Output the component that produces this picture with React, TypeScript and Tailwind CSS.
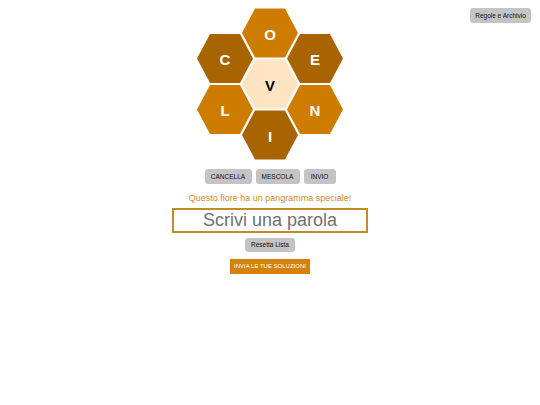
import React from "react";

const LIGHT = "#cd7c00";
const DARK = "#a86400";

function hexPoints(cx: number, cy: number) {
  const hw = 28;
  const eh = 15;
  const hh = 24.5;
  return [
    [cx - hw, cy],
    [cx - eh, cy - hh],
    [cx + eh, cy - hh],
    [cx + hw, cy],
    [cx + eh, cy + hh],
    [cx - eh, cy + hh],
  ]
    .map((p) => p.join(","))
    .join(" ");
}

const cells = [
  { l: "O", dx: 0, dy: -51, c: LIGHT },
  { l: "C", dx: -45, dy: -25.5, c: DARK },
  { l: "E", dx: 45, dy: -25.5, c: DARK },
  { l: "L", dx: -45, dy: 25.5, c: LIGHT },
  { l: "N", dx: 45, dy: 25.5, c: LIGHT },
  { l: "I", dx: 0, dy: 51, c: DARK },
];

function Hive() {
  const cx = 75;
  const cy = 78;
  return (
    <svg width="150" height="156" viewBox="0 0 150 156" className="block">
      {cells.map((cell) => (
        <g key={cell.l}>
          <polygon points={hexPoints(cx + cell.dx, cy + cell.dy)} fill={cell.c} />
          <text
            x={cx + cell.dx}
            y={cy + cell.dy + 1}
            textAnchor="middle"
            dominantBaseline="central"
            fill="#ffffff"
            fontFamily="'Liberation Sans', Arial, sans-serif"
            fontWeight="bold"
            fontSize="15"
          >
            {cell.l}
          </text>
        </g>
      ))}
      <polygon points={hexPoints(cx, cy)} fill="#ffe4c4" />
      <text
        x={cx}
        y={cy + 1}
        textAnchor="middle"
        dominantBaseline="central"
        fill="#000000"
        fontFamily="'Liberation Sans', Arial, sans-serif"
        fontWeight="bold"
        fontSize="15"
      >
        V
      </text>
    </svg>
  );
}

export default function App() {
  return (
    <div className="relative w-[540px] h-[405px] bg-white font-['Liberation_Sans',Arial,sans-serif]">
      <button className="absolute top-[8px] right-[9px] w-[61px] h-[15px] rounded-[3px] bg-[#c4c4c4] text-[6.5px] text-[#111] whitespace-nowrap flex items-center justify-center">
        Regole e Archivio
      </button>
      <div className="flex flex-col items-center pt-[6px]">
        <Hive />
        <div className="flex gap-[4px] mt-[7px]">
          <button className="w-[47px] h-[15px] rounded-[3px] bg-[#c4c4c4] text-[6.5px] text-[#111] whitespace-nowrap flex items-center justify-center">
            CANCELLA
          </button>
          <button className="w-[44px] h-[15px] rounded-[3px] bg-[#c4c4c4] text-[6.5px] text-[#111] whitespace-nowrap flex items-center justify-center">
            MESCOLA
          </button>
          <button className="w-[32px] h-[15px] rounded-[3px] bg-[#c4c4c4] text-[6.5px] text-[#111] whitespace-nowrap flex items-center justify-center">
            INVIO
          </button>
        </div>
        <div className="mt-[8px] h-[12px] leading-[12px] text-[9px] text-[#cf8a1e] whitespace-nowrap">
          Questo fiore ha un pangramma speciale!
        </div>
        <input
          placeholder="Scrivi una parola"
          className="mt-[4px] w-[196px] h-[25px] border-2 border-[#c38a2c] bg-white text-center text-[18px] leading-[21px] text-[#555] placeholder:text-[#707070] outline-none"
        />
        <button className="mt-[5px] w-[50px] h-[14px] rounded-[3px] bg-[#c4c4c4] text-[6.5px] text-[#111] whitespace-nowrap flex items-center justify-center">
          Resetta Lista
        </button>
        <button className="mt-[7px] w-[80px] h-[15px] bg-[#d4820a] text-[6px] text-white whitespace-nowrap flex items-center justify-center">
          INVIA LE TUE SOLUZIONI
        </button>
      </div>
    </div>
  );
}
